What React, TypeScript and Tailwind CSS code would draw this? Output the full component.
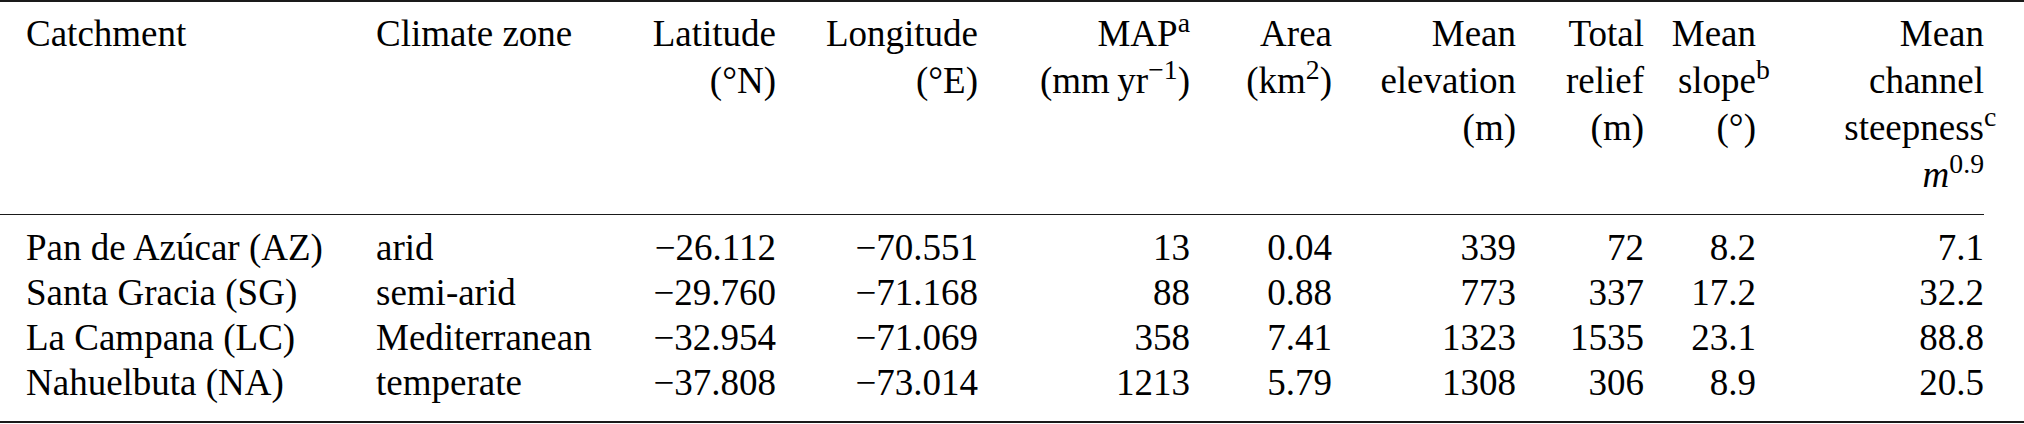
import { ReactNode } from "react";

const widths = [
  "w-[376px]",
  "w-[264px]",
  "w-[136px]",
  "w-[202px]",
  "w-[212px]",
  "w-[142px]",
  "w-[184px]",
  "w-[128px]",
  "w-[112px]",
  "w-[228px]",
];

const rows = [
  ["Pan de Azúcar (AZ)", "arid", "−26.112", "−70.551", "13", "0.04", "339", "72", "8.2", "7.1"],
  ["Santa Gracia (SG)", "semi-arid", "−29.760", "−71.168", "88", "0.88", "773", "337", "17.2", "32.2"],
  ["La Campana (LC)", "Mediterranean", "−32.954", "−71.069", "358", "7.41", "1323", "1535", "23.1", "88.8"],
  ["Nahuelbuta (NA)", "temperate", "−37.808", "−73.014", "1213", "5.79", "1308", "306", "8.9", "20.5"],
];

// superscript that hangs past the right edge, like a table footnote mark
function Mark({ children }: { children: ReactNode }) {
  return <sup className="inline-block w-0">{children}</sup>;
}

const headers: ReactNode[] = [
  "Catchment",
  "Climate zone",
  <>
    Latitude
    <br />
    (°N)
  </>,
  <>
    Longitude
    <br />
    (°E)
  </>,
  <>
    MAP<sup>a</sup>
    <br />
    (mm{"\u2009"}yr<sup>−1</sup>)
  </>,
  <>
    Area
    <br />
    (km<sup>2</sup>)
  </>,
  <>
    Mean
    <br />
    elevation
    <br />
    (m)
  </>,
  <>
    Total
    <br />
    relief
    <br />
    (m)
  </>,
  <>
    Mean
    <br />
    slope<Mark>b</Mark>
    <br />
    (°)
  </>,
  <>
    Mean
    <br />
    channel
    <br />
    steepness<Mark>c</Mark>
    <br />
    <i>m</i>
    <sup>0.9</sup>
  </>,
];

function App() {
  return (
    <div className="w-[2024px] h-[424px] bg-white text-black font-[family-name:'Liberation_Serif','Times_New_Roman',serif] text-[37px]">
      <div className="border-t-2 border-b-2 border-[#1a1a1a]">
        <table className="table-fixed w-[1984px] border-collapse">
          <colgroup>
            {widths.map((w, i) => (
              <col key={i} className={w} />
            ))}
          </colgroup>
          <thead>
            <tr className="border-b border-[#1a1a1a]">
              {headers.map((h, i) => (
                <th
                  key={i}
                  className={
                    "align-top font-normal leading-[47px] pt-[8px] pb-[16px] whitespace-nowrap " +
                    (i === 0 ? "text-left pl-[26px]" : i === 1 ? "text-left" : "text-right")
                  }
                >
                  {h}
                </th>
              ))}
            </tr>
          </thead>
          <tbody>
            {rows.map((r, ri) => (
              <tr key={ri}>
                {r.map((c, ci) => (
                  <td
                    key={ci}
                    className={
                      "leading-[45px] whitespace-nowrap " +
                      (ri === 0 ? "pt-[10px] " : "") +
                      (ri === rows.length - 1 ? "pb-[16px] " : "") +
                      (ci === 0 ? "text-left pl-[26px]" : ci === 1 ? "text-left" : "text-right")
                    }
                  >
                    {c}
                  </td>
                ))}
              </tr>
            ))}
          </tbody>
        </table>
      </div>
    </div>
  );
}

export default App;
